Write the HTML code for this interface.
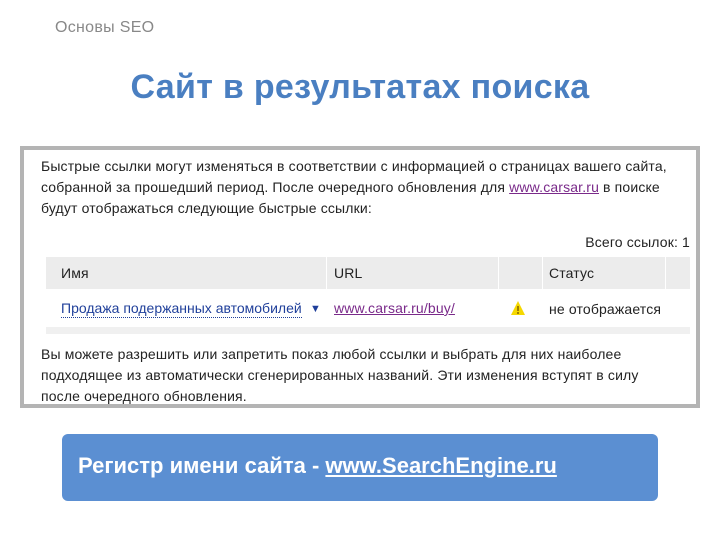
<!DOCTYPE html>
<html><head><meta charset="utf-8"><style>
body{margin:0;width:720px;height:540px;background:#fff;position:relative;overflow:hidden;font-family:"Liberation Sans",sans-serif}
.a{position:absolute}
.hdr{left:55px;top:19px;font-size:16px;color:#888;letter-spacing:0.3px}
.title{left:0;width:720px;text-align:center;top:68px;font-size:34px;font-weight:bold;color:#4a7fc1;letter-spacing:0.3px}
.box{left:20px;top:146px;width:672px;height:254px;border:4px solid #b4b4b4;background:#fff}
.t{font-size:14px;color:#222;line-height:21px;letter-spacing:0.15px}
a{color:#7a2a8a}
.hd{left:22px;top:107px;width:644px;height:32px;background:#ececec}
.sep{top:107px;width:1px;height:32px;background:#fff}
.strip{left:22px;top:177px;width:644px;height:7px;background:#f0f0f0}
.blue{left:62px;top:434px;width:596px;height:67px;background:#5b8fd2;border-radius:6px;color:#fff;font-size:22px;font-weight:bold}
</style></head><body>
<div class="a hdr">Основы SEO</div>
<div class="a title">Сайт в результатах поиска</div>
<div class="a box">
 <div class="a t" style="left:17px;top:6px;width:638px">Быстрые ссылки могут изменяться в соответствии с информацией о страницах вашего сайта, собранной за прошедший период. После очередного обновления для <a style="text-decoration:underline">www.carsar.ru</a> в поиске будут отображаться следующие быстрые ссылки:</div>
 <div class="a t" style="right:6px;top:82px">Всего ссылок: 1</div>
 <div class="a hd"></div>
 <div class="a sep" style="left:302px"></div><div class="a sep" style="left:474px"></div><div class="a sep" style="left:518px"></div><div class="a sep" style="left:641px"></div>
 <div class="a t" style="left:37px;top:113px">Имя</div>
 <div class="a t" style="left:310px;top:113px">URL</div>
 <div class="a t" style="left:525px;top:113px">Статус</div>
 <div class="a t" style="left:37px;top:149px;color:#1f3f9a;border-bottom:1px dotted #1f3f9a;line-height:18px;letter-spacing:0">Продажа подержанных автомобилей</div>
 <div class="a t" style="left:286px;top:149px;color:#1f3f9a;font-size:11px">▼</div>
 <div class="a t" style="left:310px;top:149px;line-height:18px"><a style="text-decoration:underline">www.carsar.ru/buy/</a></div>
 <svg class="a" style="left:486px;top:150px" width="16" height="16"><polygon points="8,1 15,15 1,15" fill="#f5d800"/><rect x="7" y="6" width="2" height="5" fill="#a08000"/><rect x="7" y="12" width="2" height="2" fill="#a08000"/></svg>
 <div class="a t" style="left:525px;top:149px">не отображается</div>
 <div class="a strip"></div>
 <div class="a t" style="left:17px;top:194px;width:628px">Вы можете разрешить или запретить показ любой ссылки и выбрать для них наиболее подходящее из автоматически сгенерированных названий. Эти изменения вступят в силу после очередного обновления.</div>
</div>
<div class="a blue"><div style="position:absolute;left:16px;top:19px">Регистр имени сайта - <span style="text-decoration:underline">www.SearchEngine.ru</span></div></div>
</body></html>
